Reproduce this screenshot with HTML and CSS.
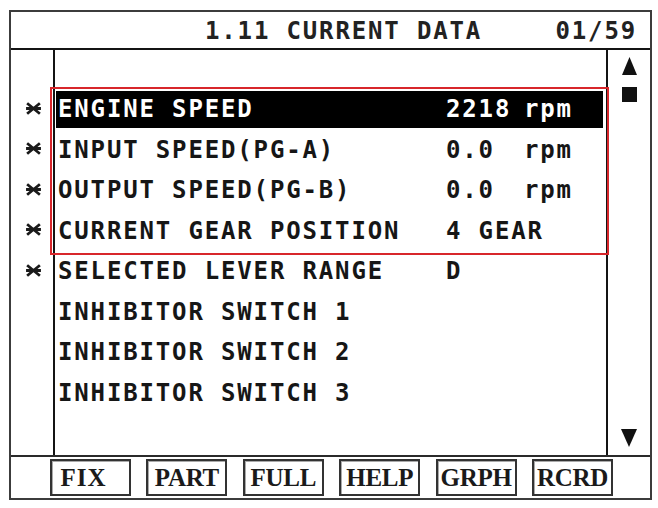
FILE: index.html
```html
<!DOCTYPE html>
<html>
<head>
<meta charset="utf-8">
<link rel="stylesheet" href="styles.css">
</head>
<body>
<div class="screen">
  <div class="title"><span>1.11 CURRENT DATA</span><span>01/59</span></div>
  <div class="main">
    <div class="marks">
      <div class="mrow"></div>
      <div class="mrow"><svg class="mk" viewBox="0 0 16 12"><path d="M2 1L14 11M14 1L2 11M1 6H15"/></svg></div>
      <div class="mrow"><svg class="mk" viewBox="0 0 16 12"><path d="M2 1L14 11M14 1L2 11M1 6H15"/></svg></div>
      <div class="mrow"><svg class="mk" viewBox="0 0 16 12"><path d="M2 1L14 11M14 1L2 11M1 6H15"/></svg></div>
      <div class="mrow"><svg class="mk" viewBox="0 0 16 12"><path d="M2 1L14 11M14 1L2 11M1 6H15"/></svg></div>
      <div class="mrow"><svg class="mk" viewBox="0 0 16 12"><path d="M2 1L14 11M14 1L2 11M1 6H15"/></svg></div>
      <div class="mrow"></div>
      <div class="mrow"></div>
      <div class="mrow"></div>
      <div class="mrow"></div>
    </div>
    <div class="list">
      <div class="row"></div>
      <div class="row"><div class="cell sel"><span>ENGINE SPEED</span><span>2218</span><span>rpm</span></div></div>
      <div class="row"><div class="cell"><span>INPUT SPEED(PG-A)</span><span>0.0</span><span>rpm</span></div></div>
      <div class="row"><div class="cell"><span>OUTPUT SPEED(PG-B)</span><span>0.0</span><span>rpm</span></div></div>
      <div class="row"><div class="cell"><span>CURRENT GEAR POSITION</span><span class="wide">4 GEAR</span></div></div>
      <div class="row"><div class="cell"><span>SELECTED LEVER RANGE</span><span>D</span><span></span></div></div>
      <div class="row"><div class="cell"><span>INHIBITOR SWITCH 1</span><span></span><span></span></div></div>
      <div class="row"><div class="cell"><span>INHIBITOR SWITCH 2</span><span></span><span></span></div></div>
      <div class="row"><div class="cell"><span>INHIBITOR SWITCH 3</span><span></span><span></span></div></div>
      <div class="row"></div>
    </div>
    <div class="scroll">
      <svg class="up" viewBox="0 0 15 18"><polygon points="7.5,0 15,18 0,18"/></svg>
      <div class="thumb"></div>
      <svg class="down" viewBox="0 0 16 18"><polygon points="0,0 16,0 8,18"/></svg>
    </div>
    <div class="redbox"></div>
  </div>
  <div class="footer">
    <div class="btn fix">FIX</div>
    <div class="btn">PART</div>
    <div class="btn">FULL</div>
    <div class="btn">HELP</div>
    <div class="btn">GRPH</div>
    <div class="btn">RCRD</div>
  </div>
</div>
</body>
</html>
```
FILE: styles.css
```css
* { box-sizing: border-box; }
body {
  margin: 0;
  background: #fff;
  font-family: "DejaVu Sans Mono", "Liberation Mono", monospace;
  font-weight: bold;
  color: #161616;
}
.screen {
  margin: 10px 0 0 9px;
  width: 643px;
  height: 490px;
  border: 2px solid #3c3c3c;
  display: flex;
  flex-direction: column;
}
.title {
  height: 38px;
  border-bottom: 2px solid #141414;
  display: flex;
  justify-content: space-between;
  align-items: center;
  padding: 2px 13px 0 194px;
  font-size: 24px;
  letter-spacing: 1.85px;
  color: #222;
}
.main {
  position: relative;
  height: 405px;
  display: flex;
}
.marks {
  width: 44px;
  border-right: 2px solid #141414;
  display: flex;
  flex-direction: column;
}
.mrow {
  height: 40.5px;
  display: flex;
  justify-content: center;
  padding: 11px 0 0 2px;
}
.mk {
  width: 17px;
  height: 13px;
  fill: none;
  stroke: #1a1a1a;
  stroke-width: 2.6;
}
.list {
  width: 551px;
  display: flex;
  flex-direction: column;
}
.row {
  height: 40.5px;
  padding: 0 3px 0 1px;
}
.cell {
  height: 37px;
  display: grid;
  grid-template-columns: 388px 78px 1fr;
  align-items: center;
  padding: 0 0 0 2px;
  font-size: 24px;
  letter-spacing: 1.85px;
  white-space: pre;
}
.cell .wide { grid-column: 2 / 4; }
.cell.sel {
  background: #000;
  color: #fff;
}
.scroll {
  width: 44px;
  border-left: 2px solid #141414;
  display: flex;
  flex-direction: column;
  align-items: center;
  padding: 7px 0 8px 0;
}
.up { width: 15px; height: 18px; fill: #111; }
.thumb { width: 15px; height: 15px; background: #111; margin-top: 12px; }
.down { width: 16px; height: 18px; fill: #111; margin-top: auto; }
.redbox {
  position: absolute;
  left: 39px;
  top: 37px;
  width: 559px;
  height: 168px;
  border: 2.5px solid #d8262b;
}
.footer {
  flex: 1;
  border-top: 2px solid #2a2a2a;
  display: flex;
  gap: 15.4px;
  padding: 2px 0 0 39px;
}
.btn {
  width: 81px;
  height: 37px;
  border: 2px solid #333;
  box-shadow: inset 1px 1px 0 #aaa;
  display: flex;
  align-items: center;
  justify-content: center;
  font-family: "Liberation Serif", serif;
  font-size: 25px;
  font-weight: bold;
  letter-spacing: -0.3px;
  color: #1a1a1a;
  padding-top: 1px;
}
.btn.fix { padding-right: 14px; letter-spacing: 1px; }
```
